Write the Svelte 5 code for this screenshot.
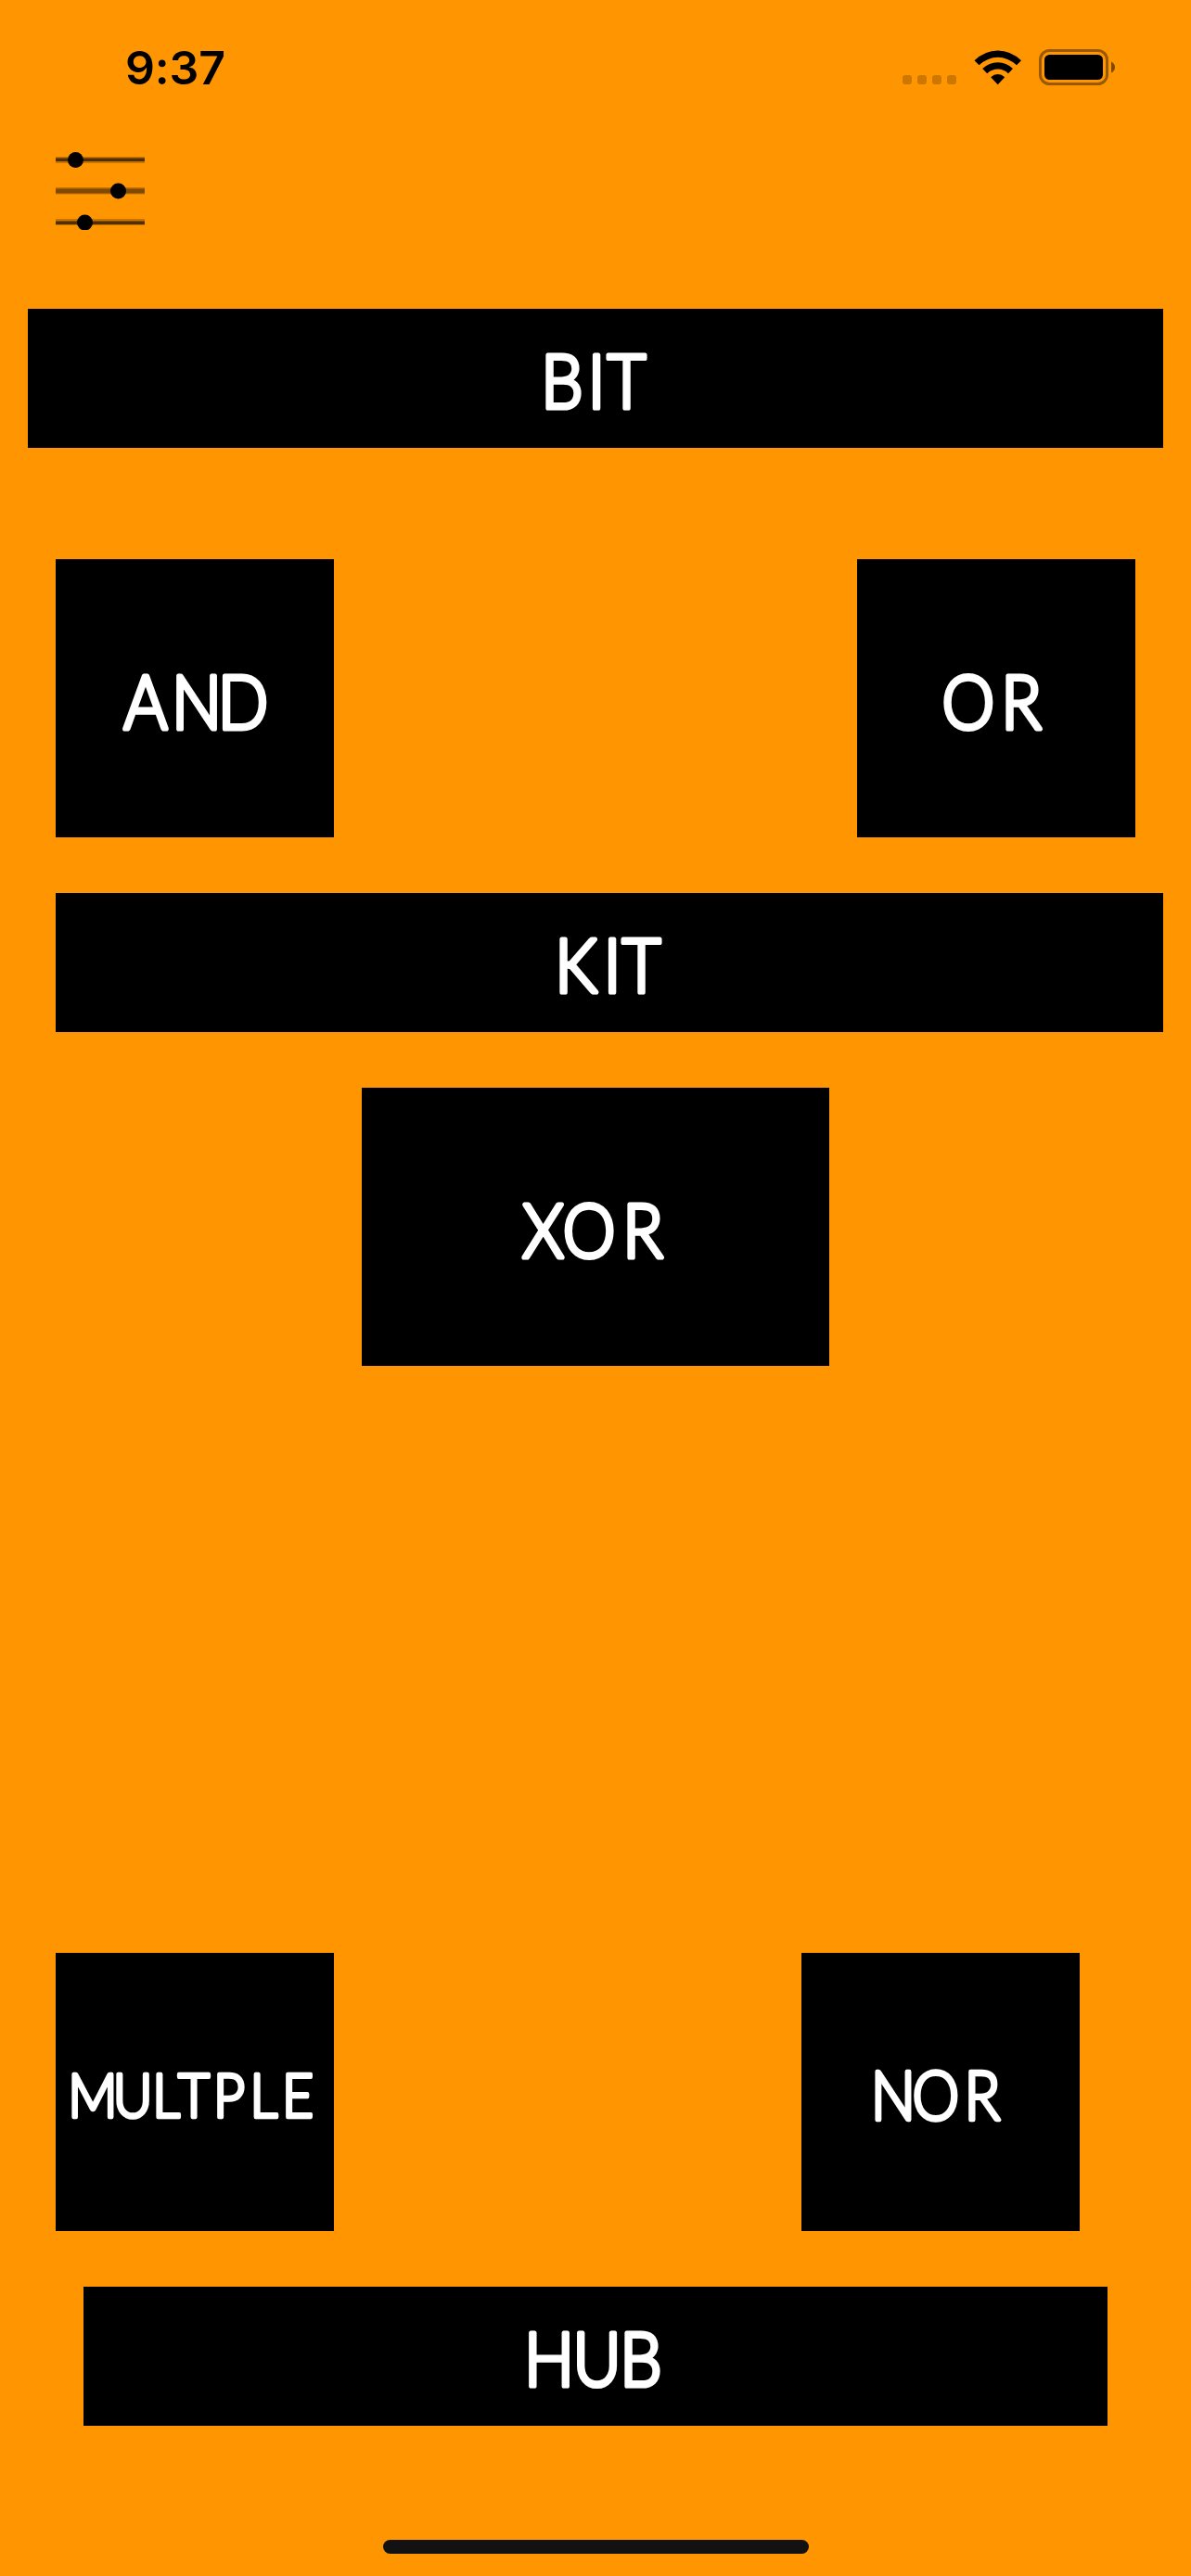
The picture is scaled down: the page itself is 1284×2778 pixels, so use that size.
<script>
  const dots = [0, 1, 2, 3];

  // Hand-lettered captions: each glyph is centred on its own x position.
  const squeeze = 0.89;
  const labels = {
    bit: { text: 'BIT', w: 1224, h: 150, y: 107.5, size: 80.5, at: [576, 613, 645.5] },
    and: { text: 'AND', w: 300, h: 300, y: 183, size: 80.5, at: [97, 152, 202] },
    or: { text: 'OR', w: 300, h: 300, y: 183, size: 80.5, at: [120, 177] },
    kit: { text: 'KIT', w: 1194, h: 150, y: 107.5, size: 80.5, at: [561, 600, 631.5] },
    xor: { text: 'XOR', w: 504, h: 300, y: 183, size: 80.5, at: [195.5, 245, 303] },
    multple: { text: 'MULTPLE', w: 300, h: 300, y: 177, size: 66, at: [40, 83, 119, 149, 187, 224.5, 261] },
    nor: { text: 'NOR', w: 300, h: 300, y: 180, size: 72, at: [99, 145, 195] },
    hub: { text: 'HUB', w: 1104, h: 150, y: 107.5, size: 80.5, at: [502, 553.5, 601] }
  };
  const positions = (label) => label.at.map((x) => (x / squeeze).toFixed(1)).join(' ');
</script>

{#snippet caption(label)}
  <svg class="caption" width={label.w} height={label.h} viewBox="0 0 {label.w} {label.h}">
    <text transform="scale({squeeze} 1)" x={positions(label)} y={label.y} font-size={label.size}>{label.text}</text>
  </svg>
{/snippet}

<div class="screen">
  <header class="status">
    <span class="clock">9:37</span>
    <div class="indicators">
      <div class="signal">
        {#each dots as dot (dot)}<i></i>{/each}
      </div>
      <svg class="wifi" width="52" height="38" viewBox="0 0 52 38" aria-hidden="true">
        <path d="M.5 11.2Q12 .5 25.7.5T51 11.2L46 16.3Q36.500 7.700 25.700 7.700T5.500 16.300Z" />
        <path d="M9.200 20Q16.500 13.200 25.700 13.200T42 20L37 25.200Q32 20.600 25.700 20.600T14.200 25.200Z" />
        <path d="M18.200 29.200Q21.500 26 25.700 26T33.200 29.200L25.700 37.300Z" />
      </svg>
      <svg class="battery" width="83" height="39" viewBox="0 0 83 39" aria-hidden="true">
        <rect x="1.500" y="1.500" width="72" height="36" rx="10" fill="none" stroke="#000" stroke-opacity=".4" stroke-width="3" />
        <rect x="6" y="6" width="63" height="27" rx="5.500" />
        <path d="M78 13.500Q82 15.500 82 19.500T78 25.500Z" fill-opacity=".5" />
      </svg>
    </div>
  </header>

  <button class="settings" aria-label="Settings">
    <svg width="96" height="84" viewBox="0 0 96 84" aria-hidden="true">
      <g fill-opacity=".22">
        <rect y="5" width="96" height="7" />
        <rect y="38" width="96" height="7.500" />
        <rect y="72" width="96" height="7" />
      </g>
      <g fill-opacity=".6">
        <rect y="6.500" width="96" height="3.500" />
        <rect y="39.500" width="96" height="5" fill-opacity=".36" />
        <rect y="74.500" width="96" height="3.500" />
      </g>
      <circle cx="21.500" cy="8.500" r="8.500" />
      <circle cx="67.500" cy="42" r="8.500" />
      <circle cx="31.500" cy="76" r="8.500" />
    </svg>
  </button>

  <main>
    <button class="block">{@render caption(labels.bit)}</button>
    <div class="row top">
      <button class="block">{@render caption(labels.and)}</button>
      <button class="block">{@render caption(labels.or)}</button>
    </div>
    <button class="block kit">{@render caption(labels.kit)}</button>
    <button class="block xor">{@render caption(labels.xor)}</button>
    <div class="row bottom">
      <button class="block">{@render caption(labels.multple)}</button>
      <button class="block">{@render caption(labels.nor)}</button>
    </div>
    <button class="block hub">{@render caption(labels.hub)}</button>
  </main>

  <div class="home"></div>
</div>

<style>
  :global(body) {
    margin: 0;
    background: #ff9500;
  }
  .screen {
    box-sizing: border-box;
    width: 1284px;
    height: 2778px;
    display: flex;
    flex-direction: column;
    background: #ff9500;
    overflow: hidden;
  }
  .status {
    height: 164px;
    flex: none;
    box-sizing: border-box;
    padding: 42px 81px 0 135px;
    display: flex;
    justify-content: space-between;
    align-items: flex-start;
  }
  .clock {
    font: 600 50px/62px Inter, sans-serif;
    letter-spacing: -0.2px;
    color: #000;
  }
  .indicators {
    display: flex;
    padding-top: 11px;
  }
  .signal {
    display: flex;
    gap: 6px;
    padding-top: 28px;
    margin-right: 19px;
  }
  .signal i {
    width: 10px;
    height: 10px;
    border-radius: 3px;
    background: rgba(0, 0, 0, 0.2);
  }
  .wifi {
    margin: 1px 18px 0 0;
  }
  button {
    border: 0;
    padding: 0;
    margin: 0;
  }
  .settings {
    align-self: flex-start;
    width: 96px;
    height: 84px;
    margin-left: 60px;
    background: none;
    flex: none;
  }
  .settings svg {
    display: block;
  }
  main {
    flex: 1;
    display: flex;
    flex-direction: column;
    padding: 85px 30px 0;
  }
  .block {
    flex: none;
    background: #000;
  }
  .caption {
    display: block;
  }
  .caption text {
    font-family: Lato, sans-serif;
    font-weight: 300;
    text-anchor: middle;
    fill: #fff;
    stroke: #fff;
    stroke-width: 5.2px;
    stroke-linejoin: round;
  }
  .row {
    display: flex;
    justify-content: space-between;
  }
  .top {
    margin: 120px 30px 60px;
  }
  .kit {
    margin-left: 30px;
  }
  .xor {
    margin-top: 60px;
    align-self: center;
  }
  .bottom {
    margin: auto 90px 60px 30px;
  }
  .bottom text {
    stroke-width: 4.4px;
  }
  .hub {
    margin: 0 60px;
  }
  .home {
    flex: none;
    width: 459px;
    height: 15px;
    margin: 123px auto 24px;
    border-radius: 8px;
    background: #121212;
  }
</style>
